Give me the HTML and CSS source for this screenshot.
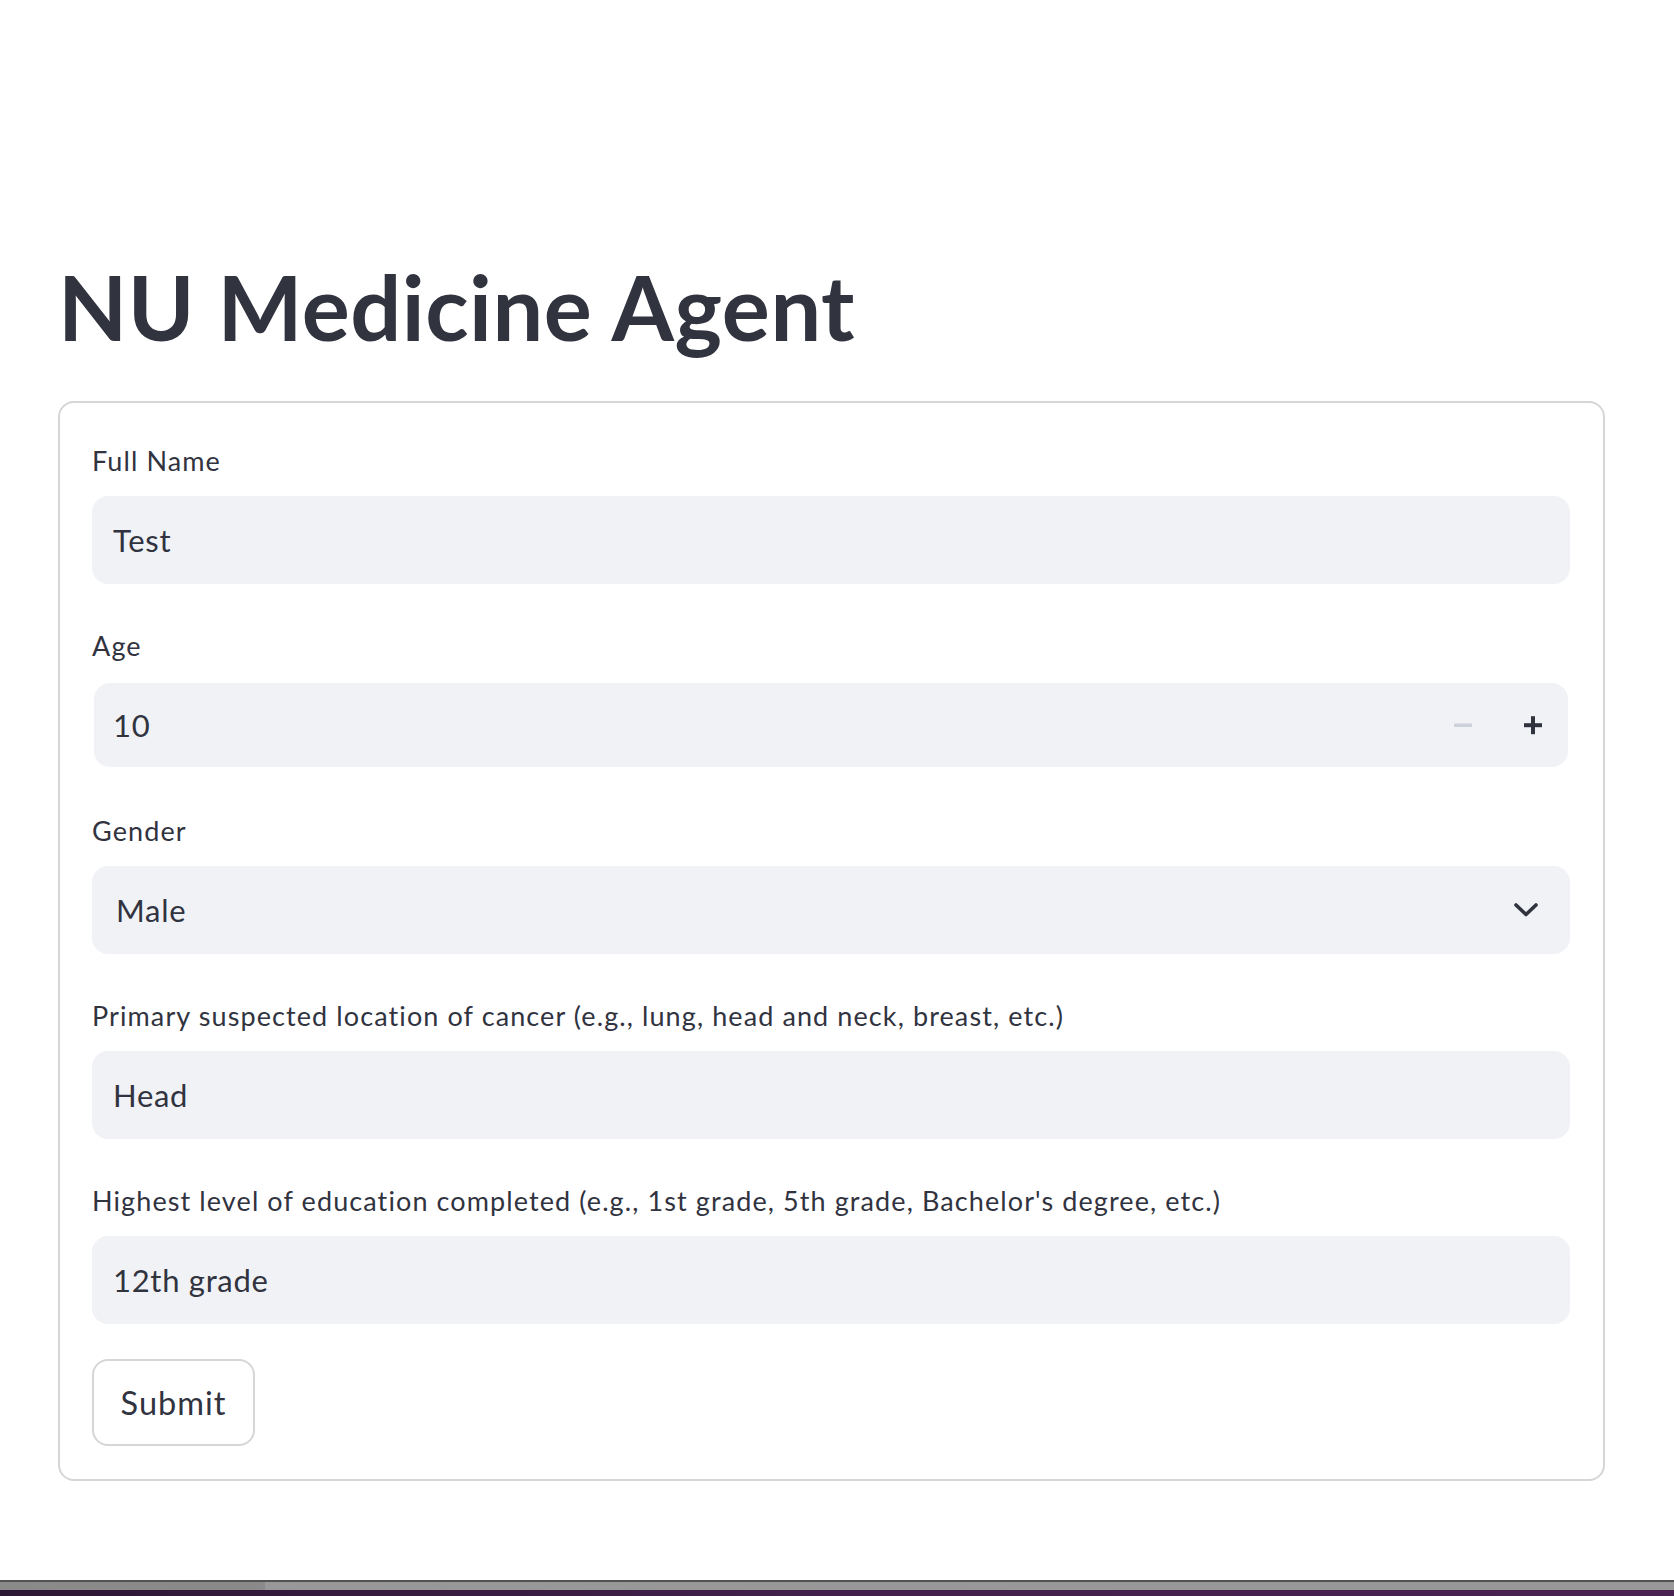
FILE: index.html
```html
<!DOCTYPE html>
<html lang="en">
<head>
<meta charset="utf-8">
<title>NU Medicine Agent</title>
<link rel="stylesheet" href="styles.css">
</head>
<body>
<main class="main">
  <h1 class="title">NU Medicine Agent</h1>
  <form class="card">
    <div class="field">
      <label class="label">Full Name</label>
      <div class="input"><span class="value">Test</span></div>
    </div>
    <div class="field">
      <label class="label">Age</label>
      <div class="input number"><span class="value">10</span>
        <span class="step minus"><svg width="20" height="20" viewBox="0 0 20 20"><rect x="1" y="8.5" width="18" height="3.5" fill="#cdd1da"/></svg></span>
        <span class="step plus"><svg width="20" height="20" viewBox="0 0 20 20"><rect x="1" y="8.2" width="18" height="4" fill="#31333f"/><rect x="8" y="1.2" width="4" height="18" fill="#31333f"/></svg></span>
      </div>
    </div>
    <div class="field">
      <label class="label">Gender</label>
      <div class="input select"><span class="value">Male</span>
        <span class="chev"><svg width="26" height="16" viewBox="0 0 26 16"><path d="M3 3 L13 12.5 L23 3" fill="none" stroke="#31333f" stroke-width="3.6" stroke-linecap="round" stroke-linejoin="round"/></svg></span>
      </div>
    </div>
    <div class="field">
      <label class="label">Primary suspected location of cancer (e.g., lung, head and neck, breast, etc.)</label>
      <div class="input"><span class="value">Head</span></div>
    </div>
    <div class="field">
      <label class="label">Highest level of education completed (e.g., 1st grade, 5th grade, Bachelor's degree, etc.)</label>
      <div class="input"><span class="value">12th grade</span></div>
    </div>
    <button type="button" class="submit">Submit</button>
  </form>
</main>
<div class="taskbar">
  <div class="tb-grey"><div class="tb-left"></div><div class="tb-right"></div></div>
  <div class="tb-purple"></div>
</div>
</body>
</html>
```

FILE: styles.css
```css
html, body {
  margin: 0;
  padding: 0;
  background: #ffffff;
}
body {
  min-height: 1596px;
  display: flex;
  flex-direction: column;
  font-family: "Lato", "Liberation Sans", sans-serif;
  color: #31333f;
}
.main {
  padding: 249px 69px 0 58px;
}
.title {
  margin: 0 0 37px 0;
  font-size: 90px;
  line-height: 115px;
  font-weight: 700;
  color: #31333f;
  letter-spacing: 0.5px;
}
.card {
  border: 2px solid #d6d6d9;
  border-radius: 16px;
  padding: 38px 33px 33px 32px;
  display: flex;
  flex-direction: column;
  align-items: flex-start;
}
.field {
  align-self: stretch;
  display: flex;
  flex-direction: column;
  margin-bottom: 42px;
}
.field:last-of-type {
  margin-bottom: 35px;
}
.label {
  font-size: 27px;
  line-height: 40px;
  letter-spacing: 1.1px;
  margin-bottom: 15px;
  color: #31333f;
}
.input {
  height: 88px;
  background: #f0f2f6;
  border-radius: 16px;
  display: flex;
  align-items: center;
  padding: 0 21px;
  box-sizing: border-box;
}
.value {
  font-size: 31px;
  letter-spacing: 0.7px;
  color: #31333f;
  flex: 1;
}
.number {
  height: 84px;
  margin: 2px 2px 2px 2px;
  padding-right: 0;
  padding-left: 19px;
}
.step {
  width: 70px;
  height: 84px;
  display: flex;
  align-items: center;
  justify-content: center;
}
.select {
  padding-left: 24px;
  padding-right: 31px;
}
.chev {
  display: flex;
  align-items: center;
}
.submit {
  height: 87px;
  width: 163px;
  border: 2px solid #d6d6d9;
  border-radius: 16px;
  background: #ffffff;
  font-family: "Lato", "Liberation Sans", sans-serif;
  font-size: 32.5px;
  letter-spacing: 1px;
  color: #31333f;
  padding: 0;
  margin: 0;
}
.taskbar {
  margin-top: auto;
  display: flex;
  flex-direction: column;
}
.tb-grey {
  height: 8px;
  display: flex;
  border-top: 2px solid #525252;
}
.tb-left {
  width: 265px;
  background: #8a8a8a;
}
.tb-right {
  flex: 1;
  background: #989898;
}
.tb-purple {
  height: 6px;
  background: linear-gradient(90deg, #2c1734 0%, #42204b 50%, #4a2252 100%);
}
```
